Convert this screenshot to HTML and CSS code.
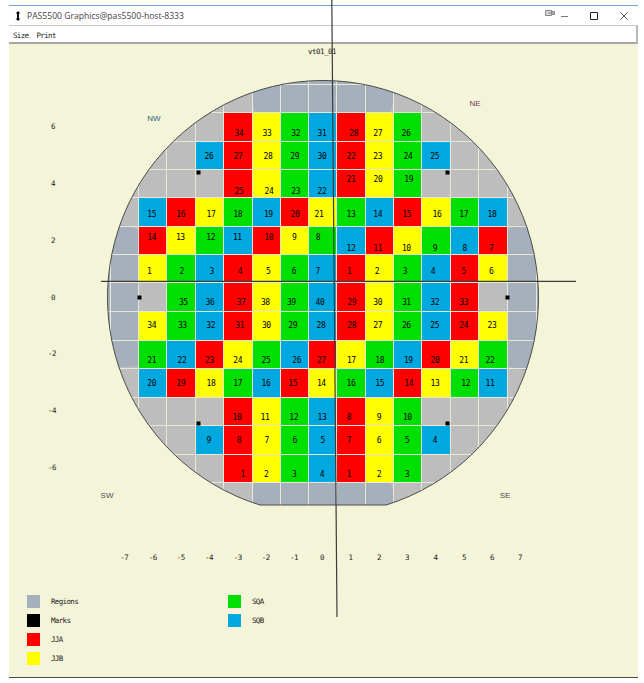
FILE: index.html
```html
<!DOCTYPE html>
<html lang="en">
<head>
<meta charset="utf-8">
<title>PAS5500 Graphics@pas5500-host-8333</title>
<link rel="stylesheet" href="styles.css">
</head>
<body>
<div class="window">
  <header class="titlebar">
    <svg class="app-icon" viewBox="0 0 6 10" width="6" height="10"><path d="M3 0L5.500 2.500H4V7.500H5.500L3 10L.5 7.500H2V2.500H.5Z"/></svg>
    <span class="title">PAS5500 Graphics@pas5500-host-8333</span>
    <svg class="kbd-icon" viewBox="0 0 10 6" width="10" height="6"><path d="M.5 .5H6.500V5.500H.5Z M6.500 1.500H9.500V4.500H6.500 M3 3H9"/></svg>
    <svg class="win-btn min" viewBox="0 0 10 10" width="10" height="10"><path d="M1 5.500H8"/></svg>
    <svg class="win-btn max" viewBox="0 0 10 10" width="10" height="10"><path d="M1.500 1.500H8.500V8.500H1.500Z"/></svg>
    <svg class="win-btn close" viewBox="0 0 10 10" width="10" height="10"><path d="M1.500 1.500L8.500 8.500M8.500 1.500L1.500 8.500"/></svg>
  </header>
  <nav class="menubar"><span>Size</span><span>Print</span></nav>
  <main class="canvas">
    <svg class="map" viewBox="9 44 629 551" width="629" height="551">
      <defs><clipPath id="wafer"><path d="M260 505A215.500 217 0 1 1 386 505Z"/></clipPath></defs>
      <text class="mono" x="322" y="54" text-anchor="middle">vt01_01</text>

      <g clip-path="url(#wafer)">
        <path class="c-gray" d="M100 70H545V510H100Z"/>
        <path class="c-region" d="M252 70V93Q253 106 255 113H390Q393 105 395 93V70Z"/>
        <path class="c-region" d="M254 483Q252 495 251 510H396Q394 495 391 483Z"/>
        <path class="c-region" d="M100 224H120Q130 226 139 230V366Q130 366 122 367H100Z"/>
        <path class="c-region" d="M508 229Q515 226 520 225H545V372H530Q518 368 508 367Z"/>
        <path class="c-red" d="M224 113H252V198H224Z M337 113H365V198H337Z M167 198H195V227H167Z M280 198H309V227H280Z M394 198H422V227H394Z M139 227H167V255H139Z M252 227H280V255H252Z M365 227H394V255H365Z M479 227H507V255H479Z M224 255H252V340H224Z M337 255H365V340H337Z M450 255H479V340H450Z M195 340H224V369H195Z M309 340H337V369H309Z M422 340H450V369H422Z M167 369H195V397H167Z M280 369H309V397H280Z M394 369H422V397H394Z M224 397H252V483H224Z M337 397H365V483H337Z"/>
        <path class="c-yellow" d="M252 113H280V198H252Z M365 113H394V198H365Z M195 198H224V227H195Z M309 198H337V227H309Z M422 198H450V227H422Z M167 227H195V255H167Z M280 227H309V255H280Z M394 227H422V255H394Z M139 255H167V340H139Z M252 255H280V340H252Z M365 255H394V340H365Z M479 255H507V340H479Z M224 340H252V369H224Z M337 340H365V369H337Z M450 340H479V369H450Z M195 369H224V397H195Z M309 369H337V397H309Z M422 369H450V397H422Z M252 397H280V483H252Z M365 397H394V483H365Z"/>
        <path class="c-green" d="M280 113H309V198H280Z M394 113H422V198H394Z M224 198H252V227H224Z M337 198H365V227H337Z M450 198H479V227H450Z M195 227H224V255H195Z M309 227H337V255H309Z M422 227H450V255H422Z M167 255H195V340H167Z M280 255H309V340H280Z M394 255H422V340H394Z M139 340H167V369H139Z M252 340H280V369H252Z M365 340H394V369H365Z M479 340H507V369H479Z M224 369H252V397H224Z M337 369H365V397H337Z M450 369H479V397H450Z M280 397H309V483H280Z M394 397H422V483H394Z"/>
        <path class="c-blue" d="M309 113H337V198H309Z M195 141H224V170H195Z M422 141H450V170H422Z M139 198H167V227H139Z M252 198H280V227H252Z M365 198H394V227H365Z M479 198H507V227H479Z M224 227H252V255H224Z M337 227H365V255H337Z M450 227H479V255H450Z M195 255H224V340H195Z M309 255H337V340H309Z M422 255H450V340H422Z M167 340H195V369H167Z M280 340H309V369H280Z M394 340H422V369H394Z M139 369H167V397H139Z M252 369H280V397H252Z M365 369H394V397H365Z M479 369H507V397H479Z M309 397H337V483H309Z M195 426H224V454H195Z M422 426H450V454H422Z"/>
        <path class="c-gray" d="M139 283H167V312H139Z M479 283H507V312H479Z"/>
        <path class="grid" d="M100 84.500H545M100 112.500H545M100 141.500H545M100 169.500H545M100 197.500H545M100 226.500H545M100 254.500H545M100 282.500H545M100 311.500H545M100 340.500H545M100 368.500H545M100 397.500H545M100 425.500H545M100 454.500H545M100 482.500H545M110.500 70V510M138.500 70V510M166.500 70V510M195.500 70V510M223.500 70V510M252.500 70V510M280.500 70V510M308.500 70V510M336.500 70V510M365.500 70V510M393.500 70V510M421.500 70V510M450.500 70V510M478.500 70V510M507.500 70V510M536.500 70V510"/>
      </g>
      <path class="outline" d="M260 505A215.500 217 0 1 1 386 505Z"/>

      <g class="c-mark">
        <path d="M137.500 295.500h4v4h-4Z M505.500 295.500h4v4h-4Z M196.500 170.500h4v4h-4Z M445.500 170.500h4v4h-4Z M196.500 421.500h4v4h-4Z M445.500 421.500h4v4h-4Z"/>
      </g>

      <g class="num" transform="translate(0,136)"><text x="239">34</text><text x="267">33</text><text x="295.700">32</text><text x="322">31</text><text x="353.700">28</text><text x="377.700">27</text><text x="406">26</text></g>
      <g class="num" transform="translate(0,159)"><text x="209">26</text><text x="238">27</text><text x="268">28</text><text x="294.700">29</text><text x="322">30</text><text x="351">22</text><text x="377.700">23</text><text x="408">24</text><text x="434.700">25</text></g>
      <g class="num" transform="translate(0,194)"><text x="239">25</text><text x="269">24</text><text x="295.700">23</text><text x="322">22</text></g>
      <g class="num" transform="translate(0,182)"><text x="351">21</text><text x="378">20</text><text x="408.700">19</text></g>
      <g class="num" transform="translate(0,217)"><text x="151.700">15</text><text x="180.700">16</text><text x="211">17</text><text x="237.700">18</text><text x="268.300">19</text><text x="295">20</text><text x="319">21</text><text x="351">13</text><text x="377.700">14</text><text x="406.700">15</text><text x="437">16</text><text x="463.700">17</text><text x="492">18</text></g>
      <g class="num" transform="translate(0,240)"><text x="151.700">14</text><text x="180.300">13</text><text x="210.700">12</text><text x="237.300">11</text><text x="268.700">10</text><text x="294.300">9</text><text x="318">8</text></g>
      <g class="num" transform="translate(0,251)"><text x="351">12</text><text x="377.700">11</text><text x="406.300">10</text><text x="435">9</text><text x="464.700">8</text><text x="491.300">7</text></g>
      <g class="num" transform="translate(0,274)"><text x="149.300">1</text><text x="181.700">2</text><text x="211.700">3</text><text x="240">4</text><text x="268.300">5</text><text x="294">6</text><text x="317.700">7</text><text x="349.300">1</text><text x="377">2</text><text x="405">3</text><text x="433">4</text><text x="463.700">5</text><text x="491.300">6</text></g>
      <g class="num" transform="translate(0,305)"><text x="183.300">35</text><text x="210">36</text><text x="241">37</text><text x="265.300">38</text><text x="291.300">39</text><text x="320">40</text><text x="351.700">29</text><text x="377.700">30</text><text x="406.300">31</text><text x="434.700">32</text><text x="463.700">33</text></g>
      <g class="num" transform="translate(0,328)"><text x="151.700">34</text><text x="182.300">33</text><text x="210.700">32</text><text x="239.700">31</text><text x="266.300">30</text><text x="292.700">29</text><text x="321">28</text><text x="351.700">28</text><text x="377.700">27</text><text x="406.300">26</text><text x="434.700">25</text><text x="463.700">24</text><text x="492">23</text></g>
      <g class="num" transform="translate(0,363)"><text x="151.700">21</text><text x="182">22</text><text x="209.300">23</text><text x="237.700">24</text><text x="266">25</text><text x="296.700">26</text><text x="321.300">27</text><text x="351.300">17</text><text x="379.700">18</text><text x="408.300">19</text><text x="435">20</text><text x="463.700">21</text><text x="490">22</text></g>
      <g class="num" transform="translate(0,386)"><text x="151.700">20</text><text x="180.700">19</text><text x="211">18</text><text x="237.700">17</text><text x="266">16</text><text x="292.700">15</text><text x="321.300">14</text><text x="351">16</text><text x="379.700">15</text><text x="408.700">14</text><text x="435">13</text><text x="465.700">12</text><text x="490">11</text></g>
      <g class="num" transform="translate(0,420)"><text x="237">10</text><text x="265">11</text><text x="293.700">12</text><text x="322">13</text><text x="349">8</text><text x="379">9</text><text x="407.300">10</text></g>
      <g class="num" transform="translate(0,443)"><text x="208.700">9</text><text x="239">8</text><text x="266.700">7</text><text x="294.700">6</text><text x="322.700">5</text><text x="349">7</text><text x="379">6</text><text x="407">5</text><text x="435">4</text></g>
      <g class="num" transform="translate(0,477)"><text x="242.700">1</text><text x="266.300">2</text><text x="294.300">3</text><text x="322">4</text><text x="349">1</text><text x="379">2</text><text x="407">3</text></g>

      <g class="axis">
        <text x="53" y="129">6</text><text x="53" y="186">4</text><text x="53" y="243">2</text><text x="53" y="300">0</text><text x="52" y="356">-2</text><text x="52" y="413">-4</text><text x="52" y="470">-6</text>
        <text x="124.300" y="560">-7</text><text x="152.700" y="560">-6</text><text x="180.700" y="560">-5</text><text x="209" y="560">-4</text><text x="237.700" y="560">-3</text><text x="265.700" y="560">-2</text><text x="294" y="560">-1</text><text x="322" y="560">0</text><text x="350.500" y="560">1</text><text x="379" y="560">2</text><text x="407" y="560">3</text><text x="435.500" y="560">4</text><text x="464" y="560">5</text><text x="492" y="560">6</text><text x="520" y="560">7</text>
      </g>
      <text class="dir nw" x="154" y="121">NW</text>
      <text class="dir ne" x="475" y="106">NE</text>
      <text class="dir sw" x="107" y="498">SW</text>
      <text class="dir se" x="505" y="498">SE</text>

      <path class="cross" d="M101 281.300H576"/>
      <path class="cross" d="M331.800 0L337 617"/>
    </svg>
    <section class="legend">
      <div class="legend-item"><i class="swatch c-region"></i><span>Regions</span></div>
      <div class="legend-item"><i class="swatch sq-a"></i><span>SQA</span></div>
      <div class="legend-item"><i class="swatch mark"></i><span>Marks</span></div>
      <div class="legend-item"><i class="swatch sq-b"></i><span>SQB</span></div>
      <div class="legend-item"><i class="swatch jj-a"></i><span>JJA</span></div>
      <div class="legend-item"></div>
      <div class="legend-item"><i class="swatch jj-b"></i><span>JJB</span></div>
    </section>
  </main>
</div>
</body>
</html>
```
FILE: styles.css
```css
* { box-sizing: border-box; }
html, body { margin: 0; height: 683px; background: #fff; overflow: hidden; }
.window {
  margin: 5px 6px 0 9px;
  height: 673px;
  display: flex;
  flex-direction: column;
  border-bottom: 1px solid #4a4a46;
}
.titlebar {
  height: 20px;
  flex: none;
  border-top: 1px solid #6ea8dc;
  background: #fff;
  display: flex;
  align-items: center;
  padding-left: 6px;
  position: relative;
}
.app-icon { fill: #111; margin-right: 6px; }
.title {
  font: 8.600px "Open Sans", sans-serif;
  color: #444;
  flex: 1;
}
.kbd-icon { fill: #d8d8d8; stroke: #888; stroke-width: 1; margin: -6px 5px 0 0; }
.win-btn { fill: none; stroke: #444; stroke-width: 1; }
.min { margin-right: 19px; stroke: #777; }
.max { margin-right: 20px; stroke: #222; }
.close { margin-right: 9px; stroke: #555; }
.menubar {
  height: 19px;
  flex: none;
  background: #fff;
  border-top: 1px solid #c8c8c8;
  border-right: 2px solid #b8b8b4;
  border-bottom: 2px solid #a8a8a0;
  display: flex;
  align-items: center;
  gap: 8px;
  padding: 2px 0 0 4px;
  font: 7.500px "DejaVu Sans Mono", monospace;
  letter-spacing: -.65px;
  color: #222;
}
.canvas {
  flex: 1;
  background: #f4f4d8;
  display: flex;
  flex-direction: column;
}
.map { display: block; flex: none; overflow: visible; position: relative; z-index: 2; }
.mono, .num text, .axis text {
  font-family: "DejaVu Sans Mono", monospace;
  font-size: 7.500px;
  letter-spacing: -.5px;
  fill: #222;
}
.num text { font-size: 8px; text-anchor: middle; letter-spacing: -.4px; fill: #000; }
.axis text { text-anchor: middle; fill: #222; }
.dir { font: 8px "Liberation Sans", sans-serif; text-anchor: middle; }
.nw { fill: #2f5f80; }
.ne { fill: #74365f; }
.sw { fill: #4a4a5a; }
.se { fill: #4a4a4a; }
.c-gray { fill: #bdbdbd; }
.c-region { fill: #a5b0bc; background: #a5b0bc; }
.c-red { fill: #ff0000; }
.c-yellow { fill: #ffff00; }
.c-green { fill: #00e000; }
.c-blue { fill: #00a8e0; }
.c-mark { fill: #000; }
.grid { fill: none; stroke: #e8e8d6; stroke-width: 1; shape-rendering: crispEdges; }
.outline { fill: none; stroke: #4c4c4c; stroke-width: 1; }
.cross { fill: none; stroke: #3c3c3c; stroke-width: 1.200; }
.legend {
  display: grid;
  grid-template-columns: 201px 201px;
  grid-auto-rows: 19px;
  padding-left: 18px;
}
.legend-item {
  display: flex;
  align-items: flex-start;
  gap: 11px;
  font: 7.500px/13px "DejaVu Sans Mono", monospace;
  letter-spacing: -.65px;
  color: #222;
}
.swatch { width: 13px; height: 13px; flex: none; }
.mark { background: #000; }
.jj-a { background: #ff0000; }
.jj-b { background: #ffff00; }
.sq-a { background: #00e000; }
.sq-b { background: #00a8e0; }
```
